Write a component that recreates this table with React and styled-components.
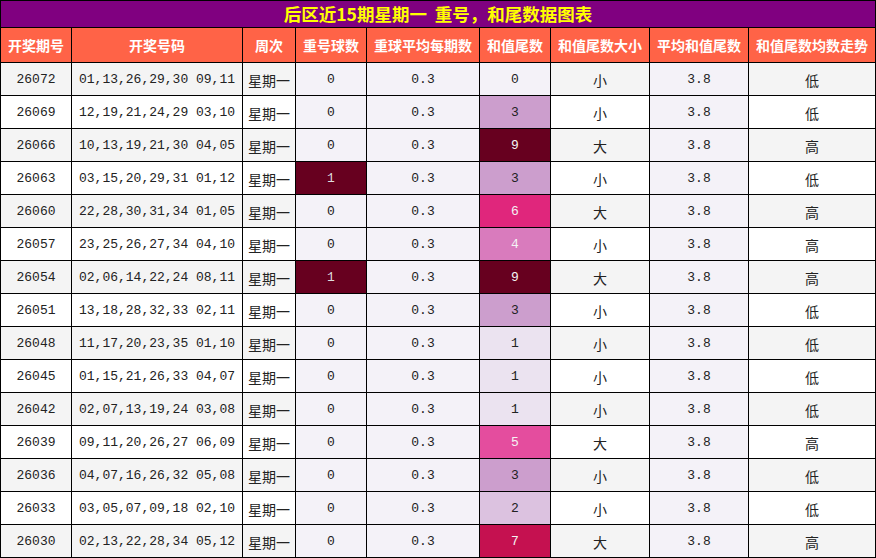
import styled, { createGlobalStyle } from "styled-components";

const GlobalStyle = createGlobalStyle`
  body {
    margin: 0;
    background: #fff;
  }
`;

const rows = [
  ["26072", "01,13,26,29,30 09,11", 0, 0, "小", "低"],
  ["26069", "12,19,21,24,29 03,10", 0, 3, "小", "低"],
  ["26066", "10,13,19,21,30 04,05", 0, 9, "大", "高"],
  ["26063", "03,15,20,29,31 01,12", 1, 3, "小", "低"],
  ["26060", "22,28,30,31,34 01,05", 0, 6, "大", "高"],
  ["26057", "23,25,26,27,34 04,10", 0, 4, "小", "高"],
  ["26054", "02,06,14,22,24 08,11", 1, 9, "大", "高"],
  ["26051", "13,18,28,32,33 02,11", 0, 3, "小", "低"],
  ["26048", "11,17,20,23,35 01,10", 0, 1, "小", "低"],
  ["26045", "01,15,21,26,33 04,07", 0, 1, "小", "低"],
  ["26042", "02,07,13,19,24 03,08", 0, 1, "小", "低"],
  ["26039", "09,11,20,26,27 06,09", 0, 5, "大", "高"],
  ["26036", "04,07,16,26,32 05,08", 0, 3, "小", "低"],
  ["26033", "03,05,07,09,18 02,10", 0, 2, "小", "低"],
  ["26030", "02,13,22,28,34 05,12", 0, 7, "大", "高"],
];

const columns = [
  ["开奖期号", 71],
  ["开奖号码", 171],
  ["周次", 53],
  ["重号球数", 71],
  ["重球平均每期数", 113],
  ["和值尾数", 71],
  ["和值尾数大小", 99],
  ["平均和值尾数", 99],
  ["和值尾数均数走势", 127],
];

// PuRd-like heat scale for the tail digit
const heat = {
  0: ["#f4f2f8", "#222"],
  1: ["#ebe3f0", "#222"],
  2: ["#dcc2e0", "#222"],
  3: ["#cc9ecd", "#222"],
  4: ["#d97bbd", "#f4f4f4"],
  5: ["#e44d9e", "#f4f4f4"],
  6: ["#e0267c", "#f4f4f4"],
  7: ["#c51150", "#f4f4f4"],
  8: ["#98003f", "#f4f4f4"],
  9: ["#67001f", "#f4f4f4"],
};

const repeatHeat = {
  0: ["#f4f2f8", "#222"],
  1: ["#67001f", "#ddd"],
};

const Table = styled.table`
  width: 876px;
  border-collapse: collapse;
  table-layout: fixed;
  font-family: "Liberation Mono", "DejaVu Sans Mono", monospace;
  font-size: 13px;
  color: #222;

  td,
  th {
    border: 1px solid #000;
    text-align: center;
    padding: 0;
  }
`;

const Title = styled.th`
  height: 26px;
  background: #800080;
  color: #ffff00;
  font-family: "Noto Sans CJK SC", "Noto Sans", sans-serif;
  font-size: 17.5px;
  font-weight: 700;
  line-height: 26px;
  white-space: pre;
`;

const HeadCell = styled.th`
  height: 34px;
  background: #ff6347;
  color: #fff;
  font-family: "Noto Sans CJK SC", "Noto Sans", sans-serif;
  font-size: 14px;
  font-weight: 700;
`;

const Row = styled.tr`
  height: 33px;
  background: ${(p) => (p.$odd ? "#f4f4f4" : "#fff")};
`;

const Cell = styled.td`
  background: ${(p) => p.$bg || "inherit"};
  color: ${(p) => p.$fg || "#222"};
`;

const CjkCell = styled.td`
  font-family: "Noto Sans CJK SC", "Noto Sans", sans-serif;
  font-size: 14px;
  padding-top: 2px !important;
`;

const App = () => {
  return (
    <>
      <GlobalStyle />
      <Table>
        <colgroup>
          {columns.map(([name, w]) => (
            <col key={name} style={{ width: w }} />
          ))}
        </colgroup>
        <thead>
          <tr>
            <Title colSpan={9}>后区近15期星期一  重号，和尾数据图表</Title>
          </tr>
          <tr>
            {columns.map(([name]) => (
              <HeadCell key={name}>{name}</HeadCell>
            ))}
          </tr>
        </thead>
        <tbody>
          {rows.map(([issue, nums, rep, tail, size, trend], i) => (
            <Row key={issue} $odd={i % 2 === 0}>
              <Cell>{issue}</Cell>
              <Cell>{nums}</Cell>
              <CjkCell>星期一</CjkCell>
              <Cell $bg={repeatHeat[rep][0]} $fg={repeatHeat[rep][1]}>
                {rep}
              </Cell>
              <Cell $bg="#f4f2f8">0.3</Cell>
              <Cell $bg={heat[tail][0]} $fg={heat[tail][1]}>
                {tail}
              </Cell>
              <CjkCell>{size}</CjkCell>
              <Cell $bg="#f4f2f8">3.8</Cell>
              <CjkCell>{trend}</CjkCell>
            </Row>
          ))}
        </tbody>
      </Table>
    </>
  );
};

export default App;
